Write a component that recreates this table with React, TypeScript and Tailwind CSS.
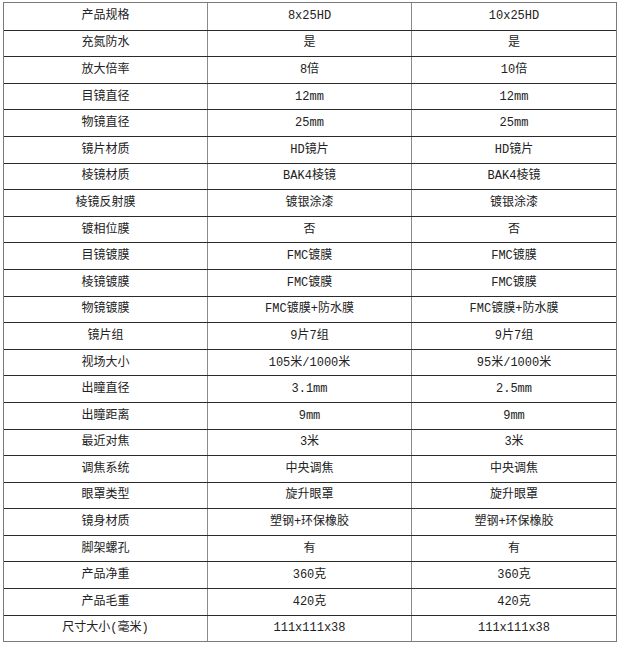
const rows: [string, string, string][] = [
  ["产品规格", "8x25HD", "10x25HD"],
  ["充氮防水", "是", "是"],
  ["放大倍率", "8倍", "10倍"],
  ["目镜直径", "12mm", "12mm"],
  ["物镜直径", "25mm", "25mm"],
  ["镜片材质", "HD镜片", "HD镜片"],
  ["棱镜材质", "BAK4棱镜", "BAK4棱镜"],
  ["棱镜反射膜", "镀银涂漆", "镀银涂漆"],
  ["镀相位膜", "否", "否"],
  ["目镜镀膜", "FMC镀膜", "FMC镀膜"],
  ["棱镜镀膜", "FMC镀膜", "FMC镀膜"],
  ["物镜镀膜", "FMC镀膜+防水膜", "FMC镀膜+防水膜"],
  ["镜片组", "9片7组", "9片7组"],
  ["视场大小", "105米/1000米", "95米/1000米"],
  ["出瞳直径", "3.1mm", "2.5mm"],
  ["出瞳距离", "9mm", "9mm"],
  ["最近对焦", "3米", "3米"],
  ["调焦系统", "中央调焦", "中央调焦"],
  ["眼罩类型", "旋升眼罩", "旋升眼罩"],
  ["镜身材质", "塑钢+环保橡胶", "塑钢+环保橡胶"],
  ["脚架螺孔", "有", "有"],
  ["产品净重", "360克", "360克"],
  ["产品毛重", "420克", "420克"],
  ["尺寸大小(毫米)", "111x111x38", "111x111x38"],
]

export default function App() {
  return (
    <div className="w-[620px] h-[645px] bg-white pt-[2px] pl-[3px]">
      <div
        className="w-[614px] border border-[#7a7a7a] text-[12px] text-[#222]"
        style={{ fontFamily: '"Liberation Mono", "Noto Sans CJK SC", monospace' }}
      >
        {rows.map((row, i) => (
          <div
            key={i}
            className={
              i === 0
                ? "grid grid-cols-3 h-[26.6px]"
                : "grid grid-cols-3 h-[26.6px] border-t border-[#2a2a2a]"
            }
          >
            <div className="flex items-center justify-center border-r border-[#8a8a8a]">{row[0]}</div>
            <div className="flex items-center justify-center border-r border-[#8a8a8a]">{row[1]}</div>
            <div className="flex items-center justify-center">{row[2]}</div>
          </div>
        ))}
      </div>
    </div>
  )
}
